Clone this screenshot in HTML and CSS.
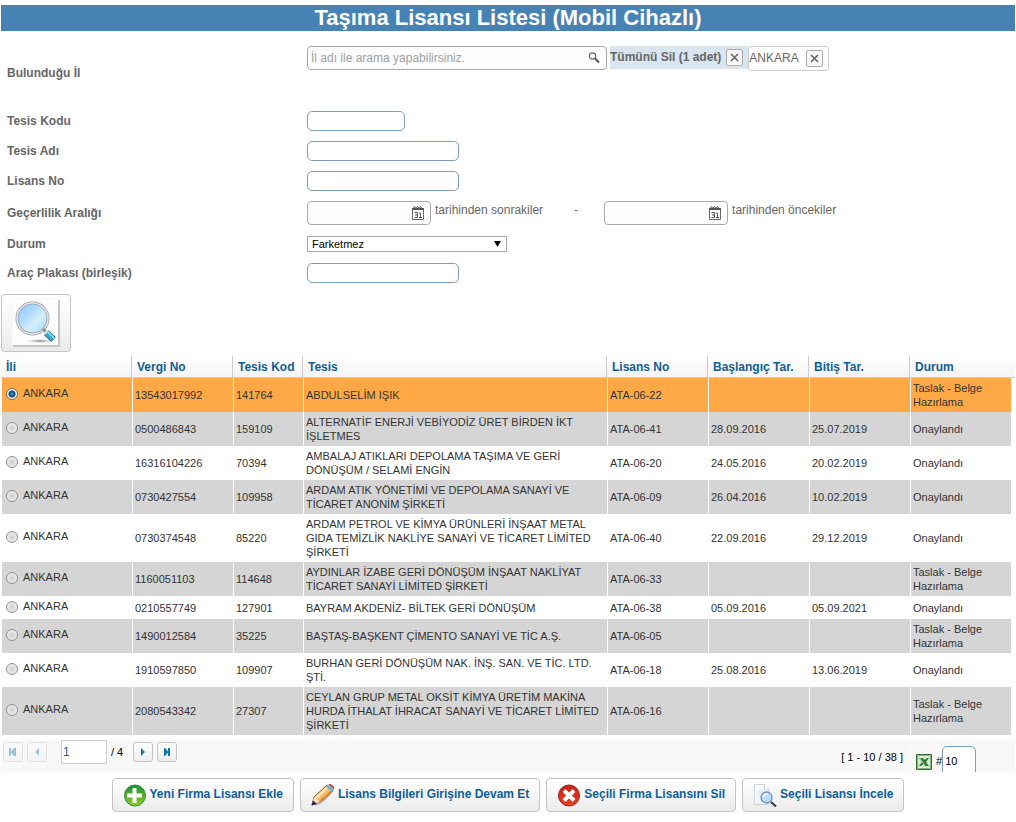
FILE: index.html
```html
<!DOCTYPE html>
<html lang="tr">
<head>
<meta charset="utf-8">
<title>Taşıma Lisansı Listesi (Mobil Cihazlı)</title>
<link rel="stylesheet" href="styles.css">
</head>
<body>
<svg class="defs" width="0" height="0" aria-hidden="true">
  <defs>
    <linearGradient id="glass" x1="0" y1="0" x2="1" y2="1"><stop offset="0" stop-color="#8ecbff"/><stop offset=".35" stop-color="#a9d9ff"/><stop offset=".6" stop-color="#d5efff"/><stop offset="1" stop-color="#9ed4ff"/></linearGradient>
    <linearGradient id="green" x1="0" y1="0" x2="0" y2="1"><stop offset="0" stop-color="#17913a"/><stop offset=".5" stop-color="#55ad2a"/><stop offset="1" stop-color="#8fd022"/></linearGradient>
    <linearGradient id="red" x1="0" y1="0" x2="0" y2="1"><stop offset="0" stop-color="#c9201d"/><stop offset="1" stop-color="#e8401c"/></linearGradient>
    <linearGradient id="paper" x1="0" y1="0" x2="1" y2="1"><stop offset="0" stop-color="#fff"/><stop offset="1" stop-color="#e8ebf2"/></linearGradient>
    <radialGradient id="shade"><stop offset="0" stop-color="#777"/><stop offset="1" stop-color="#fff" stop-opacity="0"/></radialGradient>
    <symbol id="calendar" viewBox="0 0 12 14">
      <path d="M.5 3.500h11v10H.5z" fill="#fff" stroke="#666"/><path d="M0 2h12v2H0z" fill="#555"/>
      <path d="M1 2.500l1.500-2 1.500 2 1.500-2 1.500 2 1.500-2 1.500 2" fill="none" stroke="#555"/>
      <path d="M2.500 6.500h3v5h-3M3 9h2.500M7 7h1.500v4.500M7 11.500h3" fill="none" stroke="#555"/>
    </symbol>
    <symbol id="cross" viewBox="0 0 9 9"><path d="M1 1l7 7M8 1L1 8" stroke="#666" stroke-width="1.600"/></symbol>
  </defs>
</svg>

<main class="page">
  <h1 class="title">Taşıma Lisansı Listesi (Mobil Cihazlı)</h1>

  <form class="filters">
    <div class="row row-city">
      <label class="name" for="city">Bulunduğu İl</label>
      <div class="field">
        <div class="box box-search">
          <input id="city" type="text" placeholder="İl adı ile arama yapabilirsiniz.">
          <svg width="12" height="12" viewBox="0 0 12 12"><circle cx="4.500" cy="4" r="3.200" fill="#fff" stroke="#666" stroke-width="1.200"/><path d="M7 6.500l4 4" stroke="#555" stroke-width="2"/></svg>
        </div>
        <div class="clear-all"><span>Tümünü Sil (1 adet)</span><button class="close" type="button" aria-label="Tümünü Sil"><svg width="9" height="9"><use href="#cross"/></svg></button></div>
        <div class="tag"><span>ANKARA</span><button class="close" type="button" aria-label="ANKARA sil"><svg width="9" height="9"><use href="#cross"/></svg></button></div>
      </div>
    </div>
    <div class="row"><label class="name" for="code">Tesis Kodu</label><div class="field"><input class="text short" id="code" type="text"></div></div>
    <div class="row"><label class="name" for="plant">Tesis Adı</label><div class="field"><input class="text" id="plant" type="text"></div></div>
    <div class="row"><label class="name" for="licence">Lisans No</label><div class="field"><input class="text" id="licence" type="text"></div></div>
    <div class="row row-date">
      <span class="name">Geçerlilik Aralığı</span>
      <div class="field">
        <div class="box box-date"><input id="from" type="text"><svg width="12" height="14"><use href="#calendar"/></svg></div>
        <label class="hint" for="from">tarihinden sonrakiler</label>
        <span class="dash">-</span>
        <div class="box box-date"><input id="to" type="text"><svg width="12" height="14"><use href="#calendar"/></svg></div>
        <label class="hint" for="to">tarihinden öncekiler</label>
      </div>
    </div>
    <div class="row row-status">
      <label class="name" for="status">Durum</label>
      <div class="field"><div class="select"><select id="status"><option>Farketmez</option></select><svg width="7" height="6" viewBox="0 0 8 7"><path d="M0 0h8L4 7z"/></svg></div></div>
    </div>
    <div class="row"><label class="name" for="plate">Araç Plakası (birleşik)</label><div class="field"><input class="text" id="plate" type="text"></div></div>
    <button class="search" type="button" aria-label="Ara">
      <svg width="50" height="50" viewBox="0 0 50 50">
        <path d="M1.500 1.500h46v46h-46z" fill="#fdfdfe"/><path d="M48 2v46H2" fill="none" stroke="#c4c4c4" stroke-width="2"/><path d="M1 48V1h47" fill="none" stroke="#f6f6f6"/>
        <ellipse cx="29" cy="43" rx="17" ry="2.500" fill="url(#shade)"/>
        <circle cx="21.500" cy="20.500" r="15.500" fill="url(#glass)" stroke="#9a9fa5" stroke-width="3"/>
        <circle cx="21.500" cy="20.500" r="15.500" fill="none" stroke="#e3e5e8" stroke-width="1.500"/>
        <path d="M32 31l4 4" stroke="#8c9298" stroke-width="3"/>
        <path d="M35 34.500l7.500 7" stroke="#27698d" stroke-width="6.500"/><path d="M35 34.500l7.500 7" stroke="#38a9d5" stroke-width="5"/><path d="M36 33l7 7" stroke="#9be4f8" stroke-width="1.500"/>
        <path d="M33 36.500l4-4.500" stroke="#ddd" stroke-width="2"/>
      </svg>
    </button>
  </form>

  <table class="grid">
    <colgroup><col class="c-city"><col class="c-std"><col class="c-code"><col><col class="c-std"><col class="c-std"><col class="c-std"><col class="c-status"></colgroup>
    <thead><tr><th>İli</th><th>Vergi No</th><th>Tesis Kod</th><th>Tesis</th><th>Lisans No</th><th>Başlangıç Tar.</th><th>Bitiş Tar.</th><th>Durum</th></tr></thead>
    <tbody>
      <tr class="selected"><td><label><input type="radio" name="pick" checked>ANKARA</label></td><td>13543017992</td><td>141764</td><td>ABDULSELİM IŞIK</td><td>ATA-06-22</td><td></td><td></td><td>Taslak - Belge Hazırlama</td></tr>
      <tr><td><label><input type="radio" name="pick">ANKARA</label></td><td>0500486843</td><td>159109</td><td>ALTERNATİF ENERJİ VEBİYODİZ ÜRET BİRDEN İKT İŞLETMES</td><td>ATA-06-41</td><td>28.09.2016</td><td>25.07.2019</td><td>Onaylandı</td></tr>
      <tr><td><label><input type="radio" name="pick">ANKARA</label></td><td>16316104226</td><td>70394</td><td>AMBALAJ ATIKLARI DEPOLAMA TAŞIMA VE GERİ DÖNÜŞÜM / SELAMİ ENGİN</td><td>ATA-06-20</td><td>24.05.2016</td><td>20.02.2019</td><td>Onaylandı</td></tr>
      <tr><td><label><input type="radio" name="pick">ANKARA</label></td><td>0730427554</td><td>109958</td><td>ARDAM ATIK YÖNETİMİ VE DEPOLAMA SANAYİ VE TİCARET ANONİM ŞİRKETİ</td><td>ATA-06-09</td><td>26.04.2016</td><td>10.02.2019</td><td>Onaylandı</td></tr>
      <tr><td><label><input type="radio" name="pick">ANKARA</label></td><td>0730374548</td><td>85220</td><td>ARDAM PETROL VE KİMYA ÜRÜNLERİ İNŞAAT METAL GIDA TEMİZLİK NAKLİYE SANAYİ VE TİCARET LİMİTED ŞİRKETİ</td><td>ATA-06-40</td><td>22.09.2016</td><td>29.12.2019</td><td>Onaylandı</td></tr>
      <tr><td><label><input type="radio" name="pick">ANKARA</label></td><td>1160051103</td><td>114648</td><td>AYDINLAR İZABE GERİ DÖNÜŞÜM İNŞAAT NAKLİYAT TİCARET SANAYİ LİMİTED ŞİRKETİ</td><td>ATA-06-33</td><td></td><td></td><td>Taslak - Belge Hazırlama</td></tr>
      <tr><td><label><input type="radio" name="pick">ANKARA</label></td><td>0210557749</td><td>127901</td><td>BAYRAM AKDENİZ- BİLTEK GERİ DÖNÜŞÜM</td><td>ATA-06-38</td><td>05.09.2016</td><td>05.09.2021</td><td>Onaylandı</td></tr>
      <tr><td><label><input type="radio" name="pick">ANKARA</label></td><td>1490012584</td><td>35225</td><td>BAŞTAŞ-BAŞKENT ÇİMENTO SANAYİ VE TİC A.Ş.</td><td>ATA-06-05</td><td></td><td></td><td>Taslak - Belge Hazırlama</td></tr>
      <tr><td><label><input type="radio" name="pick">ANKARA</label></td><td>1910597850</td><td>109907</td><td>BURHAN GERİ DÖNÜŞÜM NAK. İNŞ. SAN. VE TİC. LTD. ŞTİ.</td><td>ATA-06-18</td><td>25.08.2016</td><td>13.06.2019</td><td>Onaylandı</td></tr>
      <tr><td><label><input type="radio" name="pick">ANKARA</label></td><td>2080543342</td><td>27307</td><td>CEYLAN GRUP METAL OKSİT KİMYA ÜRETİM MAKİNA HURDA İTHALAT İHRACAT SANAYİ VE TİCARET LİMİTED ŞİRKETİ</td><td>ATA-06-16</td><td></td><td></td><td>Taslak - Belge Hazırlama</td></tr>
    </tbody>
  </table>

  <nav class="pager" aria-label="Sayfalar">
    <div class="pager-main">
      <button class="step" type="button" disabled aria-label="İlk"><svg width="10" height="8" viewBox="0 0 10 8"><path d="M1 0h2v3.500L6 0h2v8H6L3 4.500V8H1z"/></svg></button>
      <button class="step" type="button" disabled aria-label="Önceki"><svg width="8" height="8" viewBox="0 0 8 8"><path d="M6 0v8L2 4z"/></svg></button>
      <input class="page-no" type="text" value="1" aria-label="Sayfa">
      <span class="total">/ 4</span>
      <button class="step" type="button" aria-label="Sonraki"><svg width="8" height="8" viewBox="0 0 8 8"><path d="M2 0v8l4-4z"/></svg></button>
      <button class="step" type="button" aria-label="Son"><svg width="10" height="8" viewBox="0 0 10 8"><path d="M8 0H6v3.500L3 0H2v8h1l3-3.500V8h2z"/></svg></button>
      <span class="range">[ 1 - 10 / 38 ]</span>
    </div>
    <div class="pager-side">
      <svg width="16" height="16" viewBox="0 0 16 16"><path d="M.5.5h15v15H.5z" fill="#dcebd6" stroke="#2f7330"/><path d="M1.500 1.500h13v13h-13z" fill="none" stroke="#83b27c"/><path d="M3 4h4l1.500 2L11 4h2L10 8l3 4H9L7.500 10 5 12H3l3-4z" fill="#2c7b30"/><path d="M4 4l5 8" stroke="#a7d3a0"/></svg>
      <label for="size">#</label><input id="size" class="size" type="text" value="10">
    </div>
  </nav>

  <div class="actions">
    <button class="action" type="button"><svg width="24" height="24" viewBox="0 0 24 24"><circle cx="12" cy="12.500" r="10.500" fill="url(#green)" stroke="#288f35"/><path d="M9.500 5h4v5.500H19v4h-5.500V20h-4v-5.500H4v-4h5.500z" fill="#fff"/></svg><span>Yeni Firma Lisansı Ekle</span></button>
    <button class="action" type="button"><svg width="24" height="24" viewBox="0 0 24 24"><path d="M3 22c6 1 12-4 20-15l-2 1L8 20z" fill="#bbb"/><path d="M1 22l2-8L16 2l6 6L9 19z" fill="#f5b865" stroke="#87542d"/><path d="M4 14L15 4l2 2L6 16z" fill="#ffe4b5"/><path d="M7.500 18.500L20 7.500l1.500 1.500L9 19.500z" fill="#d8873d"/><path d="M15 3l2-1.500 6 5.500-2 2z" fill="#55b8e4"/><path d="M17.500 1.500c2-2 7 2.500 5.500 5z" fill="#cc3725"/><path d="M1 22l2-8 6 5z" fill="#fbe3bd"/><path d="M.5 22.500l1.500-5 4 3.500z" fill="#24265c"/></svg><span>Lisans Bilgileri Girişine Devam Et</span></button>
    <button class="action" type="button"><svg width="24" height="24" viewBox="0 0 24 24"><circle cx="12" cy="12.500" r="10.500" fill="url(#red)" stroke="#a51c1c"/><path d="M7 7.500l10 10M17 7.500l-10 10" stroke="#fff" stroke-width="4"/></svg><span>Seçili Firma Lisansını Sil</span></button>
    <button class="action" type="button"><svg width="24" height="24" viewBox="0 0 24 24"><path d="M1.500 1.500h10l4.500 5v15H1.500z" fill="url(#paper)" stroke="#cfd3da"/><path d="M11.500 1.500v5H16" fill="#fff" stroke="#cfd3da"/><path d="M4 9h9M4 12h5" stroke="#e0e3ea"/><circle cx="13.500" cy="14.500" r="5.500" fill="#b9dcfa" stroke="#6f8fc0" stroke-width="1.300"/><path d="M10.500 14c.5-2 2-3 4-2.500" stroke="#fff" fill="none" stroke-width="1.500"/><path d="M18 19l5 4.500" stroke="#333" stroke-width="2"/></svg><span>Seçili Lisansı İncele</span></button>
  </div>
</main>
</body>
</html>
```

FILE: styles.css
```css
* { box-sizing: border-box; }

body {
  margin: 0;
  background: #fff;
  color: #333;
  font: 12px/18px "Liberation Sans", Arial, sans-serif;
}

input, select, button { font: inherit; color: inherit; }
svg { display: block; flex: none; }
.defs { position: absolute; }
.page { padding: 5px 1px 0; }

.title {
  margin: 0;
  background: #4682b4;
  color: #fff;
  font-size: 22px;
  line-height: 26px;
  text-align: center;
}

/* Search form */
.filters { padding-top: 9px; color: #666; }
.row {
  display: grid;
  grid-template-columns: 300px 1fr;
  align-items: center;
  min-height: 30px;
  padding-left: 6px;
}
.row-city { min-height: 66px; }
.row-date { min-height: 33px; }
.row-status { min-height: 29px; }
.name { font-weight: bold; }
.field { display: flex; align-items: flex-start; }
.row-city .field { align-self: start; padding-top: 6px; }

.text {
  width: 152px;
  height: 20px;
  border: 1px solid #7f9db9;
  border-radius: 5px;
  background: #fff;
}
.short { width: 98px; }

.box {
  display: flex;
  align-items: center;
  height: 24px;
  border: 1px solid #aaa;
  border-radius: 4px;
  background: #fcfcfc;
}
.box input {
  flex: 1;
  min-width: 0;
  padding: 0 3px;
  border: 0;
  background: none;
  outline: 0;
}
.box input::placeholder { color: #a0a0a0; opacity: 1; }
.box-search { width: 300px; padding-right: 6px; }
.box-date { width: 124px; padding-right: 6px; }
.hint { padding-left: 4px; }
.dash { padding: 0 26px 0 31px; }

.clear-all, .tag { display: flex; align-items: center; }
.clear-all span, .tag span { padding-bottom: 2px; }
.clear-all {
  gap: 5px;
  height: 23px;
  margin-left: 3px;
  padding-right: 5px;
  background: #d9e5ef;
  font-weight: bold;
}
.tag {
  gap: 7px;
  height: 25px;
  padding-right: 5px;
  border: 1px solid #ccc;
  border-radius: 3px;
  background: #fff;
}
.close {
  display: grid;
  place-items: center;
  width: 17px;
  height: 17px;
  padding: 0;
  border: 1px solid #aaa;
  border-radius: 2px;
  background: #f8f8f8;
}

.select { display: grid; align-items: center; width: 200px; }
.select > * { grid-area: 1 / 1; }
.select select {
  appearance: none;
  height: 16px;
  padding: 0 4px;
  border: 1px solid #a9a9a9;
  border-radius: 0;
  background: #fff;
  color: #000;
  font-size: 11px;
  line-height: 14px;
}
.select svg { justify-self: end; margin-right: 6px; pointer-events: none; }

.search {
  display: grid;
  place-items: center;
  width: 70px;
  height: 58px;
  margin: 6px 0 4px;
  padding: 0;
  border: 1px solid #c3c3c3;
  border-radius: 4px;
  background: linear-gradient(#fff, #ebebeb);
}

/* Licence table */
.grid {
  width: 100%;
  border-spacing: 0;
  table-layout: fixed;
  font-size: 11px;
  line-height: 14px;
}
.c-city { width: 131px; }
.c-std { width: 101px; }
.c-code { width: 70px; }
.c-status { width: 105px; }
.grid th {
  height: 22px;
  padding: 0 0 0 5px;
  border-right: 1px solid #ccc;
  border-bottom: 1px solid #ccc;
  background: linear-gradient(#fff, #f4f4f4);
  color: #0f5f95;
  font-size: 12px;
  text-align: left;
  white-space: nowrap;
}
.grid th:last-child { border-right: 0; }
.grid td {
  height: 23px;
  padding: 3px 2px;
  border-left: 1px solid #fff;
  background-clip: padding-box;
}
.grid td:last-child { border-right: 4px solid #fff; }
.grid tr:nth-child(even) td { background-color: #d5d5d5; }
.grid .selected td { background-color: #ffa946; }
.grid td:first-child { padding: 2px 4px 6px; }
.grid label { display: flex; align-items: flex-start; gap: 5px; }
.grid input {
  appearance: none;
  width: 12px;
  height: 12px;
  margin: 2px 0 0;
  border: 1px solid #8e8e8e;
  border-radius: 50%;
  background: radial-gradient(circle, #ccc, #eee 70%);
}
.grid input:checked {
  border-color: #7a6a55;
  background: radial-gradient(circle, #39a0dc 0, #143f70 3px, #eef6fb 4px);
}

/* Pagination */
.pager {
  display: flex;
  height: 32px;
  margin-top: 5px;
  gap: 1px;
  overflow: hidden;
  font-size: 11px;
  color: #000;
}
.pager-main, .pager-side { display: flex; align-items: flex-start; background: #f8f8f8; }
.pager-main { flex: 1; gap: 4px; padding: 0 7px 0 2px; }
.pager-side { width: 104px; padding-left: 5px; line-height: 14px; }
.pager-side svg { margin: 14px 4px 0 0; }
.pager-side label { padding-top: 14px; }
.step {
  display: grid;
  place-items: center;
  width: 20px;
  height: 20px;
  margin-top: 2px;
  padding: 0;
  border: 1px solid #c3c3c3;
  border-radius: 3px;
  background: linear-gradient(#fff, #eee);
  color: #0b78a5;
}
.step svg { fill: currentColor; }
.step:disabled { opacity: 0.4; }
.page-no {
  width: 46px;
  height: 24px;
  margin-left: 10px;
  padding: 0 1px;
  border: 1px solid #ccc;
  color: #0f5f95;
  font-size: 12px;
}
.total { padding: 3px 6px 0 0; }
.range { margin-left: auto; padding-top: 8px; }
.size {
  width: 34px;
  height: 30px;
  margin-top: 6px;
  padding: 0 2px;
  border: 1px solid #7f9db9;
  border-radius: 5px;
  background: #fff;
}

/* Actions */
.actions {
  display: flex;
  flex-wrap: wrap;
  justify-content: center;
  gap: 6px;
  padding: 6px 0 10px;
}
.action {
  display: flex;
  align-items: center;
  gap: 3px;
  height: 34px;
  padding: 0 10px;
  border: 1px solid #c3c3c3;
  border-radius: 4px;
  background: linear-gradient(#fff, #ebebeb);
  color: #0f5f95;
  font-weight: bold;
}
.action span { padding-bottom: 2px; }
```
